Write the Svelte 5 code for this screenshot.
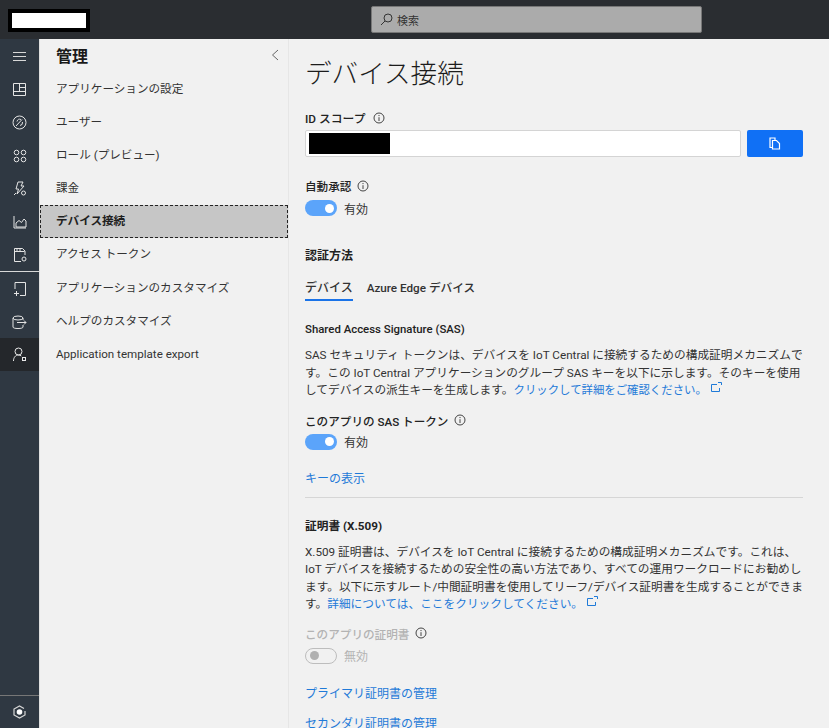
<script>
  const navItems = [
    'アプリケーションの設定',
    'ユーザー',
    'ロール (プレビュー)',
    '課金',
    'デバイス接続',
    'アクセス トークン',
    'アプリケーションのカスタマイズ',
    'ヘルプのカスタマイズ',
    'Application template export'
  ];
  const selectedNav = 'デバイス接続';
</script>

{#snippet info()}
  <svg class="info" width="12" height="12" viewBox="0 0 12 12" fill="none" stroke="currentColor">
    <circle cx="6" cy="6" r="5"/>
    <path d="M6 5.200V9M6 3v1.100"/>
  </svg>
{/snippet}

{#snippet external()}
  <svg class="ext" width="11" height="10" viewBox="0 0 11 10" fill="none" stroke="#1f7ad8">
    <path d="M6 2.500H.5v7h8V6M7 .5h3.500V3"/>
  </svg>
{/snippet}

<div class="page">
  <header class="topbar">
    <div class="logo"><div class="logo-inner"></div></div>
    <div class="search">
      <svg width="13" height="13" viewBox="0 0 13 13" fill="none" stroke="#333">
        <circle cx="8" cy="5" r="4"/>
        <path d="M5 8l-4 4"/>
      </svg>
      <span>検索</span>
    </div>
  </header>

  <div class="body">
    <nav class="rail">
      <div class="rail-group">
        <div class="rail-item">
          <svg width="15" height="15" viewBox="0 0 15 15" fill="none" stroke="#d8d8d8"><path d="M1 3.500h13M1 7.500h13M1 11.500h13"/></svg>
        </div>
        <div class="rail-item">
          <svg width="15" height="15" viewBox="0 0 15 15" fill="none" stroke="#e4e4e4"><path d="M1.500 1.500h12v12h-12zM1.500 9.500h12M7.500 1.500v8M7.500 5.500h6"/></svg>
        </div>
        <div class="rail-item">
          <svg width="15" height="15" viewBox="0 0 15 15" fill="none" stroke="#e4e4e4"><circle cx="7.500" cy="7.500" r="6.500"/><path d="M4 11l6-6.500M5 6.500a3 3 0 0 1 4-2M10.500 7a3 3 0 0 1-2.500 3.500"/></svg>
        </div>
        <div class="rail-item">
          <svg width="14" height="14" viewBox="0 0 14 14" fill="none" stroke="#e4e4e4"><circle cx="3.500" cy="3.500" r="2.300"/><circle cx="10.500" cy="3.500" r="2.300"/><circle cx="3.500" cy="10.500" r="2.300"/><circle cx="10.500" cy="10.500" r="2.300"/></svg>
        </div>
        <div class="rail-item">
          <svg width="14" height="16" viewBox="0 0 14 16" fill="none" stroke="#e4e4e4"><path d="M5 1h5L8 5h3L4 13l1.500-5H3zM1 14l2-2"/><circle cx="10.500" cy="12" r="2"/></svg>
        </div>
        <div class="rail-item">
          <svg width="14" height="14" viewBox="0 0 14 14" fill="none" stroke="#e4e4e4"><path d="M1 1v12h12M3 12V8l3-2.500 2.500 2L11 4l2 2v6z"/></svg>
        </div>
        <div class="rail-item">
          <svg width="14" height="16" viewBox="0 0 14 16" fill="none" stroke="#e4e4e4"><path d="M8 14.500H1.500v-13h8l2.500 2.500v4M1.500 4.500h10M4 1.500v3M7 1.500v3"/><circle cx="11" cy="12" r="2"/></svg>
        </div>
      </div>
      <div class="rail-group divided">
        <div class="rail-item">
          <svg width="14" height="16" viewBox="0 0 14 16" fill="none" stroke="#e4e4e4"><path d="M2 8V1.500h10.500v13H7M1 12.500h5M3.500 10v5"/></svg>
        </div>
        <div class="rail-item">
          <svg width="15" height="14" viewBox="0 0 15 14" fill="none" stroke="#e4e4e4"><ellipse cx="6" cy="3" rx="5" ry="2"/><path d="M1 3v9c0 1 2 1.500 5 1.500s5-.5 5-1.500v-2M11 3v2M5 7.500h9M12 5.500l2 2-2 2"/></svg>
        </div>
        <div class="rail-item active">
          <svg width="15" height="15" viewBox="0 0 15 15" fill="none" stroke="#e8e8e8"><circle cx="6.500" cy="4.500" r="3.500"/><path d="M1.500 14c0-3.500 2-6 5-6 1 0 2 .3 2.800 1"/><rect x="10.500" y="10.500" width="3" height="3"/></svg>
        </div>
      </div>
      <div class="rail-foot">
        <svg width="13" height="14" viewBox="0 0 13 14" fill="none" stroke="#d8d8d8" stroke-width="1.200"><path d="M11 3.500L6.500 1 1 4v6l5.500 3 5.500-3V6"/><circle cx="6.500" cy="7" r="2.800" fill="#fff" stroke="none"/></svg>
      </div>
    </nav>

    <aside class="sidebar">
      <div class="side-head">
        <h2>管理</h2>
        <svg width="8" height="12" viewBox="0 0 8 12" fill="none" stroke="#666"><path d="M7 1L1.500 6 7 11"/></svg>
      </div>
      <ul>
        {#each navItems as item}
          <li class:selected={item === selectedNav}>{item}</li>
        {/each}
      </ul>
    </aside>

    <main class="content">
      <h1>デバイス接続</h1>

      <div class="label scope-label">ID スコープ {@render info()}</div>
      <div class="scope-row">
        <div class="scope-input"><div class="redact"></div></div>
        <button class="copy" aria-label="コピー">
          <svg width="12" height="13" viewBox="0 0 12 13" fill="none" stroke="#fff" stroke-width="1.200"><path d="M3.500 10.500H1V1h5v2"/><path d="M3.500 3.500h4l3 3v5.500h-7z" fill="none"/></svg>
        </button>
      </div>

      <div class="label auto">自動承認 {@render info()}</div>
      <div class="toggle-row auto-toggle">
        <span class="toggle on"><span class="knob"></span></span>
        <span>有効</span>
      </div>

      <div class="strong method">認証方法</div>
      <div class="tabs">
        <span class="tab active">デバイス</span>
        <span class="tab">Azure Edge デバイス</span>
      </div>

      <h3>Shared Access Signature (SAS)</h3>
      <p>SAS セキュリティ トークンは、デバイスを IoT Central に接続するための構成証明メカニズムで<br />す。この IoT Central アプリケーションのグループ SAS キーを以下に示します。そのキーを使用<br />してデバイスの派生キーを生成します。<a class="sas-link" href="#sas">クリックして詳細をご確認ください。</a>{@render external()}</p>

      <div class="label sas-label">このアプリの SAS トークン {@render info()}</div>
      <div class="toggle-row">
        <span class="toggle on"><span class="knob"></span></span>
        <span>有効</span>
      </div>

      <a class="link-block show-key" href="#key">キーの表示</a>
      <hr />

      <h3 class="x509">証明書 (X.509)</h3>
      <p class="x509-text">X.509 証明書は、デバイスを IoT Central に接続するための構成証明メカニズムです。これは、<br />IoT デバイスを接続するための安全性の高い方法であり、すべての運用ワークロードにお勧めし<br />ます。以下に示すルート/中間証明書を使用してリーフ/デバイス証明書を生成することができま<br />す。<a href="#x509">詳細については、ここをクリックしてください。</a>{@render external()}</p>

      <div class="label disabled">このアプリの証明書 <span class="dark-info">{@render info()}</span></div>
      <div class="toggle-row disabled">
        <span class="toggle off"><span class="knob"></span></span>
        <span>無効</span>
      </div>

      <a class="link-block primary" href="#primary">プライマリ証明書の管理</a>
      <a class="link-block secondary" href="#secondary">セカンダリ証明書の管理</a>
    </main>
  </div>
</div>

<style>
  :global(body) {
    margin: 0;
    overflow: hidden;
  }

  .page {
    width: 829px;
    height: 728px;
    display: flex;
    flex-direction: column;
    overflow: hidden;
    font-family: Roboto, "Noto Sans CJK JP", sans-serif;
    font-size: 12px;
    color: #2b2b2b;
    background: #f1f1f1;
  }

  .topbar {
    height: 39px;
    flex: none;
    background: #2a2d31;
    position: relative;
  }

  .logo {
    position: absolute;
    left: 8px;
    top: 9px;
    width: 82px;
    height: 23px;
    background: #000;
    padding: 4px;
    box-sizing: border-box;
  }

  .logo-inner {
    height: 100%;
    background: #fff;
  }

  .search {
    position: absolute;
    left: 371px;
    top: 6px;
    width: 331px;
    height: 27px;
    box-sizing: border-box;
    background: #ababab;
    border: 1px solid #777;
    border-radius: 2px;
    display: flex;
    align-items: center;
    gap: 4px;
    padding-left: 8px;
    color: #333;
    font-size: 11px;
  }

  .body {
    flex: 1;
    display: flex;
    min-height: 0;
  }

  .rail {
    width: 39px;
    flex: none;
    background: #2f3842;
    display: flex;
    flex-direction: column;
    border-right: 1px solid #e0e0e0;
  }

  .rail-group {
    padding-top: 1px;
  }

  .rail-group.divided {
    border-top: 1px solid #d8d8d8;
    padding-top: 0;
  }

  .rail-item {
    height: 33px;
    display: flex;
    align-items: center;
    justify-content: center;
  }

  .rail-item.active {
    background: #24272b;
  }

  .rail-foot {
    margin-top: auto;
    height: 32px;
    border-top: 1px solid #777;
    display: flex;
    align-items: center;
    justify-content: center;
  }

  .sidebar {
    width: 248px;
    flex: none;
    background: #f1f1f1;
    border-right: 1px solid #e6e6e6;
  }

  .side-head {
    height: 32px;
    padding: 0 9px 2px 16px;
    display: flex;
    align-items: center;
    justify-content: space-between;
  }

  h2 {
    margin: 0;
    font-size: 16px;
    font-weight: 700;
    color: #1a1a1a;
  }

  ul {
    list-style: none;
    margin: 0;
    padding: 0;
  }

  li {
    height: 33.100px;
    line-height: 32px;
    padding-left: 16px;
    box-sizing: border-box;
    color: #333;
    font-size: 11.600px;
  }

  li.selected {
    background: #c6c6c6;
    outline: 1px dashed #222;
    outline-offset: -1px;
    font-weight: 700;
    color: #1f1f1f;
  }

  .content {
    flex: 1;
    padding: 0 26px 0 16px;
    min-width: 0;
    overflow: hidden;
  }

  h1 {
    margin: 15px 0 16px;
    font-size: 26.600px;
    line-height: 40px;
    font-weight: 300;
    color: #1c1c1c;
  }

  .label {
    font-size: 11.600px;
    font-weight: 500;
    line-height: 18px;
    display: flex;
    align-items: center;
    gap: 6px;
    color: #222;
  }

  .scope-label {
    font-size: 11.800px;
    gap: 8px;
  }

  .info {
    margin-bottom: 3px;
    color: #444;
  }

  .scope-row {
    display: flex;
    gap: 6px;
    margin: 2px 0 21px;
  }

  .scope-input {
    flex: 1;
    height: 27px;
    box-sizing: border-box;
    background: #fff;
    border: 1px solid #d4d4d4;
    border-radius: 2px;
    padding: 2px 3px;
  }

  .redact {
    width: 81px;
    height: 100%;
    background: #000;
  }

  .copy {
    width: 56px;
    height: 27px;
    padding: 0;
    border: none;
    border-radius: 2px;
    background: #1070f5;
    display: flex;
    align-items: center;
    justify-content: center;
  }

  .toggle-row {
    display: flex;
    align-items: center;
    gap: 7px;
    height: 16px;
    margin-top: 3px;
    color: #333;
  }

  .auto-toggle {
    margin-top: 4px;
  }

  .toggle {
    width: 32px;
    height: 16px;
    box-sizing: border-box;
    border-radius: 8px;
    display: flex;
    align-items: center;
  }

  .toggle.on {
    background: #5ba4fa;
    justify-content: flex-end;
    padding-right: 3px;
  }

  .toggle.off {
    border: 1px solid #bdbdbd;
    padding-left: 4px;
  }

  .knob {
    width: 9px;
    height: 9px;
    border-radius: 50%;
    background: #fff;
  }

  .off .knob {
    background: #b0b0b0;
  }

  .strong {
    font-weight: 700;
    color: #222;
  }

  .method {
    margin-top: 31px;
    line-height: 18px;
  }

  .tabs {
    display: flex;
    gap: 14px;
    margin-top: 14px;
    font-size: 11.700px;
  }

  .tab {
    padding-bottom: 2px;
    line-height: 18px;
    font-weight: 500;
    color: #333;
  }

  .tab.active {
    border-bottom: 2px solid #1a73e8;
    font-size: 12px;
  }

  h3 {
    margin: 19px 0 0;
    font-size: 11.400px;
    line-height: 18px;
    font-weight: 500;
    color: #222;
  }

  p {
    margin: 9px 0 0;
    width: 498px;
    font-size: 11.700px;
    line-height: 17.500px;
    color: #333;
    white-space: nowrap;
  }

  .ext {
    margin-left: 4px;
    vertical-align: 2px;
  }

  a {
    color: #1f7ad8;
    text-decoration: none;
  }

  .sas-link {
    font-size: 11.400px;
  }

  .sas-label {
    margin-top: 13px;
  }

  .link-block {
    display: block;
    line-height: 18px;
  }

  .show-key {
    margin-top: 20px;
  }

  hr {
    margin: 9px 0 0;
    border: none;
    border-top: 1px solid #d6d6d6;
    width: 498px;
  }

  h3.x509 {
    margin-top: 19px;
    font-size: 11.700px;
    font-weight: 700;
  }

  p.x509-text {
    margin-top: 9px;
  }

  .disabled {
    color: #b3b3b3;
    margin-top: 12px;
  }

  .toggle-row.disabled {
    margin-top: 4px;
  }

  .dark-info {
    color: #333;
    display: flex;
  }

  .primary {
    margin-top: 21px;
  }

  .secondary {
    margin-top: 12px;
  }
</style>
